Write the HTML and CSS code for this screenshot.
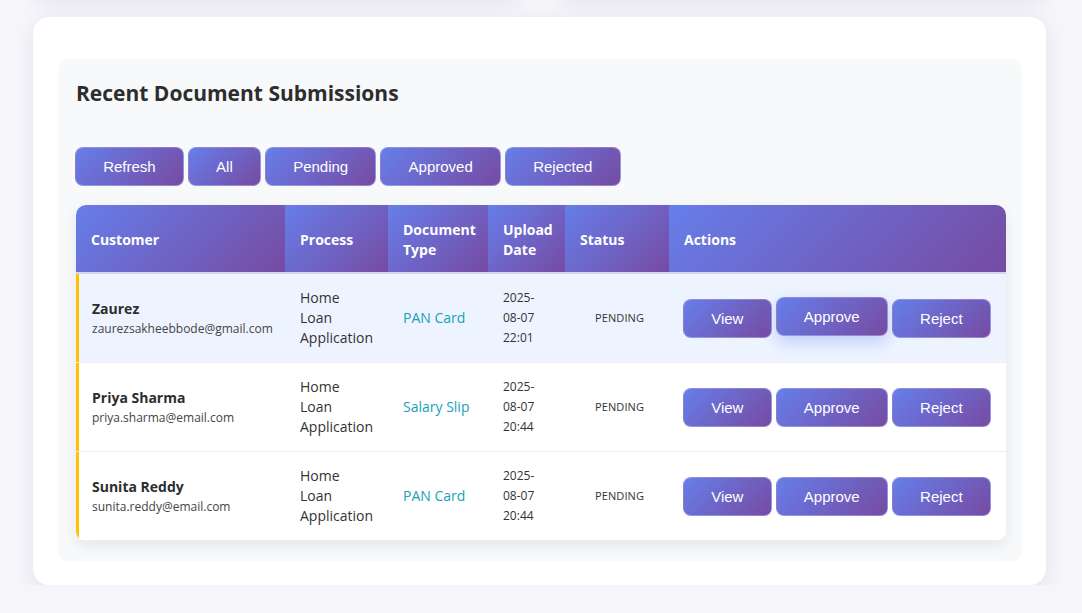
FILE: index.html
```html
<!DOCTYPE html>
<html lang="en">
<head>
<meta charset="utf-8">
<title>Recent Document Submissions</title>
<link rel="stylesheet" href="styles.css">
</head>
<body>
<div class="page">
  <div class="stats">
    <div class="stat-card"></div>
    <div class="stat-card"></div>
  </div>
  <div class="card">
    <section class="section">
      <h2 class="title">Recent Document Submissions</h2>
      <div class="filters">
        <button class="btn">Refresh</button>
        <button class="btn">All</button>
        <button class="btn">Pending</button>
        <button class="btn">Approved</button>
        <button class="btn">Rejected</button>
      </div>
      <table class="docs">
        <colgroup>
          <col class="c-cust"><col class="c-proc"><col class="c-doc"><col class="c-date"><col class="c-status"><col class="c-actions">
        </colgroup>
        <thead>
          <tr>
            <th>Customer</th>
            <th>Process</th>
            <th>Document Type</th>
            <th>Upload Date</th>
            <th>Status</th>
            <th>Actions</th>
          </tr>
        </thead>
        <tbody>
          <tr class="row hover">
            <td class="cust"><div class="name">Zaurez</div><div class="email">zaurezsakheebbode@gmail.com</div></td>
            <td class="proc">Home Loan Application</td>
            <td class="doc">PAN Card</td>
            <td class="date">2025-08-07 22:01</td>
            <td class="status"><span class="badge">Pending</span></td>
            <td class="actions"><div class="acts"><button class="btn">View</button><button class="btn lifted">Approve</button><button class="btn">Reject</button></div></td>
          </tr>
          <tr class="row">
            <td class="cust"><div class="name">Priya Sharma</div><div class="email">priya.sharma@email.com</div></td>
            <td class="proc">Home Loan Application</td>
            <td class="doc">Salary Slip</td>
            <td class="date">2025-08-07 20:44</td>
            <td class="status"><span class="badge">Pending</span></td>
            <td class="actions"><div class="acts"><button class="btn">View</button><button class="btn">Approve</button><button class="btn">Reject</button></div></td>
          </tr>
          <tr class="row">
            <td class="cust"><div class="name">Sunita Reddy</div><div class="email">sunita.reddy@email.com</div></td>
            <td class="proc">Home Loan Application</td>
            <td class="doc">PAN Card</td>
            <td class="date">2025-08-07 20:44</td>
            <td class="status"><span class="badge">Pending</span></td>
            <td class="actions"><div class="acts"><button class="btn">View</button><button class="btn">Approve</button><button class="btn">Reject</button></div></td>
          </tr>
        </tbody>
      </table>
    </section>
  </div>
</div>
</body>
</html>
```
FILE: styles.css
```css
* { box-sizing: border-box; }
html, body { margin: 0; padding: 0; }
body {
  background: #f5f5fa;
  font-family: "Open Sans", "Noto Sans", sans-serif;
  color: #333;
  overflow: hidden;
}
.page {
  margin: 0 36px 0 33px;
}
.stats {
  display: grid;
  grid-template-columns: 1fr 1fr;
  gap: 35px;
  margin-top: -100px;
  margin-bottom: 17px;
}
.stat-card {
  height: 100px;
  background: #fff;
  border-radius: 16px;
  box-shadow: 0 4px 20px rgba(40, 40, 90, 0.08);
}
.card {
  background: #fff;
  border-radius: 16px;
  padding: 42px 24px 24px 25px;
  box-shadow: 0 5px 20px rgba(40, 40, 90, 0.09);
}
.section {
  background: #f8f9fa;
  border-radius: 10px;
  padding: 20px 16px 20px 18px;
}
.title {
  margin: 0 0 40px 0;
  font-size: 21px;
  line-height: 28px;
  font-weight: 700;
  color: #2d2d2d;
}
.filters {
  display: flex;
  gap: 4px;
  margin-left: -1px;
  margin-bottom: 19px;
}
.btn {
  font-family: "Liberation Sans", Arial, sans-serif;
  font-size: 15px;
  line-height: 17px;
  color: #fff;
  padding: 10px 27.2px;
  border: 1px solid rgba(255, 255, 255, 0.25);
  border-radius: 8px;
  background: linear-gradient(135deg, #667eea 0%, #764ba2 100%);
  white-space: nowrap;
  cursor: pointer;
}
.btn.lifted {
  transform: translateY(-2px);
  box-shadow: 0 6px 16px rgba(102, 126, 234, 0.35);
}
.docs {
  width: 930px;
  table-layout: fixed;
  border-collapse: separate;
  border-spacing: 0;
  border-radius: 10px;
  overflow: hidden;
  background: #fff;
  box-shadow: 0 5px 15px rgba(0, 0, 0, 0.08);
}
.c-cust { width: 209px; }
.c-proc { width: 103px; }
.c-doc { width: 100px; }
.c-date { width: 77px; }
.c-status { width: 104px; }
.c-actions { width: 337px; }
.docs th {
  background: linear-gradient(135deg, #667eea 0%, #764ba2 100%);
  color: #fff;
  font-size: 14px;
  font-weight: 700;
  line-height: 20px;
  text-align: left;
  padding: 15px 15px 12px 15px;
  border-bottom: 2px solid #d4d6ef;
}
.docs td {
  padding: 14px 15px;
  border-bottom: 1px solid #eceef2;
  vertical-align: middle;
  font-size: 14px;
  line-height: 20px;
  color: #333;
}
.row.hover td { background: #eef4ff; }
.docs td.cust { box-shadow: inset 3px 0 0 #ffc107; padding-left: 16px; }
.name {
  font-weight: 700;
  font-size: 14px;
  line-height: 20px;
  color: #2d2d2d;
}
.email {
  font-size: 12px;
  line-height: 19px;
  color: #444;
}
.docs td.proc { padding-right: 18px; }
.docs td.doc { color: #17a2b8; }
.docs td.date { font-size: 12px; padding-right: 17px; }
.badge {
  display: inline-block;
  padding: 4px 15px;
  border-radius: 20px;
  font-size: 11px;
  line-height: 14px;
  font-weight: 400;
  letter-spacing: 0.1px;
  text-transform: uppercase;
  color: #333;
}
.docs td.actions { padding-left: 14px; padding-right: 14px; }
.acts {
  display: flex;
  gap: 4px;
  flex-wrap: nowrap;
}
```
